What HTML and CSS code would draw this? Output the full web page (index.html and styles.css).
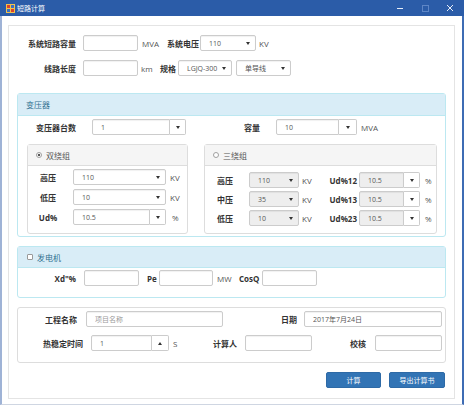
FILE: index.html
```html
<!DOCTYPE html>
<html>
<head>
	<meta charset="utf-8">
	<title>短路计算</title>
	<link rel="stylesheet" href="styles.css">
</head>
<body>
	<div class="window">
		<div class="titlebar">
			<svg class="app-icon" width="9" height="9" viewBox="0 0 9 9">
				<rect x="0" y="0" width="9" height="9" fill="#f3c24a"/>
				<rect x="1" y="1" width="3" height="3" fill="#d9412f"/>
				<rect x="5" y="1" width="3" height="3" fill="#3a6fc4"/>
				<rect x="1" y="5" width="3" height="3" fill="#3a6fc4"/>
				<rect x="5" y="5" width="3" height="3" fill="#d9412f"/>
			</svg>
			<span class="title">短路计算</span>
			<div class="controls">
				<div class="ctl"><svg width="8" height="8" viewBox="0 0 8 8"><path d="M1 4.5h6" stroke="#e8eef8" stroke-width="1"/></svg></div>
				<div class="ctl"><svg width="8" height="8" viewBox="0 0 8 8"><rect x="1.5" y="1.5" width="6" height="6" fill="none" stroke="#5e86c6" stroke-width="1"/></svg></div>
				<div class="ctl"><svg width="8" height="8" viewBox="0 0 8 8"><path d="M1 1l6 6M7 1l-6 6" stroke="#e8eef8" stroke-width="1"/></svg></div>
			</div>
		</div>
		<div class="client">
			<div class="frame">
				<div class="row first">
					<span class="lbl head-lbl">系统短路容量</span>
					<input class="field line-in" type="text">
					<span class="unit u-mva">MVA</span>
					<span class="lbl volt-lbl">系统电压</span>
					<div class="field select volt-sel">110</div>
					<span class="unit u-kv">KV</span>
				</div>
				<div class="row second">
					<span class="lbl head-lbl">线路长度</span>
					<input class="field line-in" type="text">
					<span class="unit u-km">km</span>
					<span class="lbl spec-lbl">规格</span>
					<div class="field select spec-sel">LGJQ-300</div>
					<div class="field select wire-sel">单导线</div>
				</div>

				<div class="panel trans">
					<div class="panel-head">变压器</div>
					<div class="panel-body">
						<div class="row">
							<span class="lbl count-lbl">变压器台数</span>
							<div class="group count-grp">
								<input class="field" type="text" value="1">
								<div class="gbtn"><i class="caret"></i></div>
							</div>
							<span class="lbl cap-lbl">容量</span>
							<div class="group cap-grp">
								<input class="field" type="text" value="10">
								<div class="gbtn wide"><i class="caret"></i></div>
							</div>
							<span class="unit u-mva2">MVA</span>
						</div>
						<div class="windings">
							<div class="sub two">
								<div class="sub-head"><span class="radio on"></span>双绕组</div>
								<div class="sub-body">
									<div class="row">
										<span class="lbl w-lbl">高压</span>
										<div class="field select w-sel">110</div>
										<span class="unit w-unit">KV</span>
									</div>
									<div class="row">
										<span class="lbl w-lbl">低压</span>
										<div class="field select w-sel">10</div>
										<span class="unit w-unit">KV</span>
									</div>
									<div class="row">
										<span class="lbl w-lbl">Ud%</span>
										<div class="group w-sel">
											<input class="field" type="text" value="10.5">
											<div class="gbtn"><i class="caret"></i></div>
										</div>
										<span class="unit w-pct">%</span>
									</div>
								</div>
							</div>
							<div class="sub three">
								<div class="sub-head"><span class="radio"></span>三绕组</div>
								<div class="sub-body tall">
									<div class="row">
										<span class="lbl t-lbl">高压</span>
										<div class="field select off t-sel">110</div>
										<span class="unit t-kv">KV</span>
										<span class="lbl ud-lbl">Ud%12</span>
										<div class="group ud-grp">
											<input class="field off" type="text" value="10.5">
											<div class="gbtn"><i class="caret"></i></div>
										</div>
										<span class="unit t-pct">%</span>
									</div>
									<div class="row">
										<span class="lbl t-lbl">中压</span>
										<div class="field select off t-sel">35</div>
										<span class="unit t-kv">KV</span>
										<span class="lbl ud-lbl">Ud%13</span>
										<div class="group ud-grp">
											<input class="field off" type="text" value="10.5">
											<div class="gbtn"><i class="caret"></i></div>
										</div>
										<span class="unit t-pct">%</span>
									</div>
									<div class="row">
										<span class="lbl t-lbl">低压</span>
										<div class="field select off t-sel">10</div>
										<span class="unit t-kv">KV</span>
										<span class="lbl ud-lbl">Ud%23</span>
										<div class="group ud-grp">
											<input class="field off" type="text" value="10.5">
											<div class="gbtn"><i class="caret"></i></div>
										</div>
										<span class="unit t-pct">%</span>
									</div>
								</div>
							</div>
						</div>
					</div>
				</div>

				<div class="panel gen">
					<div class="panel-head"><span class="check"></span>发电机</div>
					<div class="panel-body gen-body">
						<div class="row">
							<span class="lbl xd-lbl">Xd"%</span>
							<input class="field xd-in" type="text">
							<span class="lbl pe-lbl">Pe</span>
							<input class="field pe-in" type="text">
							<span class="unit u-mw">MW</span>
							<span class="lbl cos-lbl">CosQ</span>
							<input class="field cos-in" type="text">
						</div>
					</div>
				</div>

				<div class="info">
					<div class="row">
						<span class="lbl name-lbl">工程名称</span>
						<input class="field name-in" type="text" placeholder="项目名称">
						<span class="lbl date-lbl">日期</span>
						<input class="field date-in" type="text" value="2017年7月24日">
					</div>
					<div class="row second-info">
						<span class="lbl time-lbl">热稳定时间</span>
						<div class="group time-grp">
							<input class="field" type="text" value="1">
							<div class="gbtn"><i class="caret up"></i></div>
						</div>
						<span class="unit u-s">S</span>
						<span class="lbl calc-lbl">计算人</span>
						<input class="field calc-in" type="text">
						<span class="lbl chk-lbl">校核</span>
						<input class="field chk-in" type="text">
					</div>
				</div>

				<div class="actions">
					<button class="button calc-btn">计算</button>
					<button class="button export-btn">导出计算书</button>
				</div>
			</div>
		</div>
	</div>
</body>
</html>
```

FILE: styles.css
```css
* {
	box-sizing: border-box;
}

body {
	margin: 0;
	padding: 0;
	background-color: #ffffff;
	font-family: "Open Sans", "Noto Sans CJK SC", sans-serif;
	font-size: 8px;
	color: #333333;
}

.window {
	width: 464px;
	height: 405px;
	display: flex;
	flex-direction: column;
}

/* title bar */
.titlebar {
	height: 16px;
	background-color: #2b5ca8;
	color: white;
	display: flex;
	align-items: center;
	padding-left: 6px;
	padding-right: 2px;
}

.app-icon {
	flex: none;
}

.title {
	font-size: 7px;
	margin-left: 2px;
}

.controls {
	margin-left: auto;
	display: flex;
}

.ctl {
	width: 25px;
	height: 16px;
	display: flex;
	align-items: center;
	justify-content: center;
}

/* client area */
.client {
	flex: 1;
	display: flex;
	border-left: 2px solid #9fb3d6;
	border-right: 2px solid #3e6cb4;
	border-bottom: 1px solid #cfd6e2;
	padding: 9px 7px 5px 6px;
}

.frame {
	flex: 1;
	border: 1px solid #e4e4e4;
	padding: 0 8px;
	display: flex;
	flex-direction: column;
}

.row {
	display: flex;
	align-items: center;
	height: 16px;
	flex: none;
}

.row.first {
	margin-top: 9px;
}

.row.second {
	margin-top: 9px;
}

.lbl {
	font-weight: bold;
	flex: none;
	white-space: nowrap;
}

.unit {
	color: #555555;
	flex: none;
	white-space: nowrap;
}

/* inputs */
.field {
	height: 16px;
	border: 1px solid #cccccc;
	border-radius: 2px;
	background-color: #ffffff;
	box-shadow: inset 0 1px 1px rgba(0, 0, 0, 0.06);
	padding: 0 8px;
	font-family: "Open Sans", "Noto Sans CJK SC", sans-serif;
	font-size: 7px;
	color: #555555;
	display: flex;
	align-items: center;
	flex: none;
	outline: none;
	margin: 0;
}

.field::placeholder {
	color: #9a9a9a;
}

.field.off {
	background-color: #eeeeee;
}

.select {
	justify-content: space-between;
	padding-right: 5px;
}

.select::after {
	content: "";
	border-left: 2px solid transparent;
	border-right: 2px solid transparent;
	border-top: 3px solid #333333;
}

.group {
	display: flex;
	height: 16px;
	flex: none;
}

.group .field {
	flex: 1;
	min-width: 0;
	border-radius: 2px 0 0 2px;
}

.gbtn {
	width: 16px;
	flex: none;
	border: 1px solid #cccccc;
	border-left: none;
	border-radius: 0 2px 2px 0;
	background-color: #ffffff;
	display: flex;
	align-items: center;
	justify-content: center;
}

.gbtn.wide {
	width: 18px;
}

.caret {
	border-left: 2.5px solid transparent;
	border-right: 2.5px solid transparent;
	border-top: 3px solid #333333;
}

.caret.up {
	border-top: none;
	border-bottom: 3px solid #333333;
}

/* top rows */
.head-lbl {
	width: 59px;
	text-align: right;
}

.line-in {
	width: 55px;
	margin-left: 7px;
}

.u-mva {
	width: 29px;
	padding-left: 4px;
}

.volt-lbl {
	width: 32px;
}

.volt-sel {
	width: 56px;
	margin-left: 1px;
}

.u-kv {
	margin-left: 3px;
}

.u-km {
	width: 22px;
	padding-left: 3px;
}

.spec-lbl {
	width: 16px;
}

.spec-sel {
	width: 54px;
	margin-left: 2px;
}

.wire-sel {
	width: 55px;
	margin-left: 4px;
}

/* panels */
.panel {
	border: 1px solid #bce8f1;
	border-radius: 3px;
	flex: none;
}

.panel.trans {
	margin-top: 17px;
}

.panel.gen {
	margin-top: 9px;
}

.panel-head {
	height: 22px;
	background-color: #d9edf7;
	border-bottom: 1px solid #bce8f1;
	color: #31708f;
	display: flex;
	align-items: center;
	padding-left: 8px;
}

.gen .panel-head {
	height: 21px;
	padding-left: 9px;
}

.panel-body {
	padding: 3px 0 2px 0;
}

.gen-body {
	padding: 2px 0 11px 0;
}

.count-lbl {
	width: 58px;
	text-align: right;
}

.count-grp {
	width: 94px;
	margin-left: 16px;
}

.cap-lbl {
	width: 16px;
	margin-left: 58px;
}

.cap-grp {
	width: 81px;
	margin-left: 16px;
}

.u-mva2 {
	margin-left: 4px;
}

/* winding sub panels */
.windings {
	display: flex;
	margin-top: 9px;
}

.sub {
	height: 90px;
	border: 1px solid #dddddd;
	border-radius: 3px;
	flex: none;
}

.sub.two {
	width: 161px;
	margin-left: 9px;
}

.sub.three {
	width: 233px;
	margin-left: 16px;
}

.sub-head {
	height: 21px;
	background-color: #f5f5f5;
	border-bottom: 1px solid #dddddd;
	color: #555555;
	display: flex;
	align-items: center;
	padding-left: 8px;
}

.radio {
	width: 6px;
	height: 6px;
	border: 1px solid #a0a0a0;
	border-radius: 50%;
	background-color: #ffffff;
	margin-right: 4px;
	flex: none;
}

.radio.on {
	background: radial-gradient(circle, #555555 0, #555555 1.2px, #ffffff 1.6px);
}

.check {
	width: 6px;
	height: 6px;
	border: 1px solid #999999;
	border-radius: 1px;
	background-color: #ffffff;
	margin-right: 4px;
	flex: none;
}

.sub-body {
	display: flex;
	flex-direction: column;
	gap: 4px;
	padding-top: 3px;
}

.sub-body.tall {
	gap: 3px;
	padding-top: 6px;
}

.w-lbl {
	width: 40px;
	text-align: center;
}

.w-sel {
	width: 93px;
	margin-left: 5px;
}

.w-unit {
	margin-left: 4px;
}

.w-pct {
	margin-left: 6px;
}

.t-lbl {
	width: 44px;
	padding-left: 12px;
}

.t-sel {
	width: 50px;
}

.t-kv {
	width: 17px;
	padding-left: 3px;
}

.ud-lbl {
	width: 41px;
	text-align: right;
}

.ud-grp {
	width: 61px;
	margin-left: 2px;
}

.t-pct {
	margin-left: 5px;
}

/* generator */
.xd-lbl {
	width: 58px;
	text-align: right;
}

.xd-in {
	width: 55px;
	margin-left: 8px;
}

.pe-lbl {
	width: 20px;
	padding-left: 8px;
}

.pe-in {
	width: 54px;
}

.u-mw {
	width: 26px;
	padding-left: 4px;
}

.cos-lbl {
	width: 23px;
}

.cos-in {
	width: 55px;
}

/* project info */
.info {
	border: 1px solid #dddddd;
	border-radius: 3px;
	margin-top: 9px;
	padding: 3px 0 11px 0;
	flex: none;
}

.row.second-info {
	margin-top: 8px;
}

.name-lbl {
	width: 59px;
	text-align: right;
}

.name-in {
	width: 137px;
	margin-left: 9px;
}

.date-lbl {
	width: 74px;
	text-align: right;
}

.date-in {
	width: 138px;
	margin-left: 7px;
}

.time-lbl {
	width: 65px;
	text-align: right;
}

.time-grp {
	width: 78px;
	margin-left: 8px;
}

.time-grp .gbtn {
	width: 17px;
}

.u-s {
	width: 44px;
	padding-left: 4px;
}

.calc-lbl {
	width: 24px;
}

.calc-in {
	width: 67px;
	margin-left: 8px;
}

.chk-lbl {
	width: 54px;
	text-align: right;
}

.chk-in {
	width: 67px;
	margin-left: 9px;
}

/* buttons */
.actions {
	display: flex;
	justify-content: flex-end;
	margin-top: 9px;
	padding-right: 1px;
	gap: 8px;
}

.button {
	height: 16px;
	background-color: #3274b5;
	border: 1px solid #2e6aa6;
	border-radius: 2px;
	color: white;
	font-family: "Open Sans", "Noto Sans CJK SC", sans-serif;
	font-size: 7px;
	padding: 0;
	cursor: pointer;
}

.calc-btn {
	width: 55px;
}

.export-btn {
	width: 56px;
}
```
